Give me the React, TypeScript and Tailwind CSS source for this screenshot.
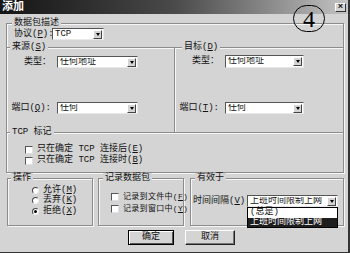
import React from "react";

const font = { fontFamily: '"Liberation Mono", "Noto Sans CJK SC", monospace' };

function Combo({ text, className }: { text: string; className: string }) {
  return (
    <div className={`flex items-center bg-white border border-t-[#555] border-l-[#555] border-b-[#e8e8e8] border-r-[#e8e8e8] ${className}`}>
      <span className="flex-1 pl-[2px] text-[9px] leading-none whitespace-nowrap overflow-hidden">{text}</span>
      <div className="shrink-0 w-[9px] h-[9px] mr-[1px] flex items-center justify-center bg-[#d4d4d4] border border-t-white border-l-white border-b-[#444] border-r-[#444]">
        <div className="w-0 h-0 border-x-[2.5px] border-x-transparent border-t-[3px] border-t-black" />
      </div>
    </div>
  );
}

function Check({ small, children }: { small?: boolean; children: React.ReactNode }) {
  return (
    <div className="flex items-center h-[9px] gap-[4px] whitespace-nowrap">
      <div className="shrink-0 w-[8px] h-[8px] bg-white border border-t-[#555] border-l-[#555] border-b-[#e0e0e0] border-r-[#e0e0e0]" />
      <span className={`${small ? "text-[8px] tracking-[0.3px]" : "text-[9px]"} leading-none`}>{children}</span>
    </div>
  );
}

function Radio({ on, children }: { on?: boolean; children: React.ReactNode }) {
  return (
    <div className="flex items-center h-[10.5px] gap-[4px] whitespace-nowrap">
      <div className="shrink-0 w-[7px] h-[7px] rounded-full bg-white border border-t-[#444] border-l-[#444] border-b-[#eee] border-r-[#eee] flex items-center justify-center">
        {on && <div className="w-[3px] h-[3px] rounded-full bg-black" />}
      </div>
      <span className="text-[9px] leading-none">{children}</span>
    </div>
  );
}

function Legend({ text, className }: { text: React.ReactNode; className: string }) {
  return (
    <span className={`absolute top-[-6px] px-[2px] bg-[#d4d4d4] text-[9px] leading-[10px] whitespace-nowrap ${className}`}>{text}</span>
  );
}

const groupCls = "relative border border-[#8c8c8c] shadow-[1px_1px_0_#f6f6f6,inset_1px_1px_0_#f6f6f6]";

export default function App() {
  return (
    <div style={font} className="relative w-[350px] h-[253px] bg-[#d4d4d4] text-[#111] overflow-hidden border-r-2 border-b border-[#333] flex flex-col">
      {/* title bar */}
      <div className="h-[14px] flex items-center justify-between bg-gradient-to-r from-[#151515] via-[#4a4a4a] to-[#c4c4c4]">
        <span className="pl-[2px] text-white font-bold text-[11px] leading-none">添加</span>
        <div className="mr-[2px] w-[11px] h-[9px] bg-[#d4d4d4] border border-t-white border-l-white border-b-[#333] border-r-[#333] flex items-center justify-center text-[9px] leading-none font-bold">×</div>
      </div>

      {/* 数据包描述 */}
      <div className={`${groupCls} mt-[9px] ml-[6px] w-[338px] h-[150px]`}>
        <Legend text="数据包描述" className="left-[5px]" />
        <div className="mt-[4px] pl-[7px] flex items-center h-[12px]">
          <span className="w-[38px] text-[9px] leading-none whitespace-nowrap">协议(<u>P</u>):</span>
          <Combo text="TCP" className="w-[52px] h-[12px]" />
        </div>

        <div className="mt-[7px] flex h-[86px] border-t border-b border-[#8c8c8c] shadow-[0_1px_0_#f6f6f6,inset_0_1px_0_#f6f6f6]">
          <div className="relative w-[168px] border-r border-[#8c8c8c]">
            <Legend text={<>来源(<u>S</u>)</>} className="left-[3px]" />
            <div className="mt-[8px] flex items-center h-[12px]">
              <span className="w-[47px] pr-[3px] text-right text-[9px] leading-none whitespace-nowrap">类型：</span>
              <Combo text="任何地址" className="ml-[3px] w-[81px] h-[12px]" />
            </div>
            <div className="mt-[34px] flex items-center h-[12px]">
              <span className="w-[47px] pr-[3px] text-right text-[9px] leading-none whitespace-nowrap">端口(<u>Q</u>):</span>
              <Combo text="任何" className="ml-[3px] w-[81px] h-[12px]" />
            </div>
          </div>
          <div className="relative flex-1 border-l border-[#f6f6f6]">
            <Legend text={<>目标(<u>D</u>)</>} className="left-[6px]" />
            <div className="mt-[7px] flex items-center h-[13px]">
              <span className="w-[46px] pr-[3px] text-right text-[9px] leading-none whitespace-nowrap">类型：</span>
              <Combo text="任何地址" className="ml-[3px] w-[79px] h-[13px]" />
            </div>
            <div className="mt-[34px] flex items-center h-[12px]">
              <span className="w-[46px] pr-[3px] text-right text-[9px] leading-none whitespace-nowrap">端口(<u>T</u>):</span>
              <Combo text="任何" className="ml-[3px] w-[79px] h-[12px]" />
            </div>
          </div>
        </div>

        <div className="relative pt-[12px]">
          <Legend text="TCP 标记" className="left-[3px]" />
          <div className="pl-[18px] flex flex-col gap-[2px]">
            <Check>只在确定 TCP 连接后(<u>E</u>)</Check>
            <Check>只在确定 TCP 连接时(<u>B</u>)</Check>
          </div>
        </div>
      </div>

      {/* bottom groups */}
      <div className="mt-[5px] ml-[7px] flex h-[48px]">
        <div className={`${groupCls} w-[86px]`}>
          <Legend text="操作" className="left-[3px]" />
          <div className="mt-[6px] pl-[24px] flex flex-col">
            <Radio>允许(<u>M</u>)</Radio>
            <Radio>丢弃(<u>K</u>)</Radio>
            <Radio on>拒绝(<u>X</u>)</Radio>
          </div>
        </div>
        <div className={`${groupCls} ml-[5px] w-[86px] overflow-visible`}>
          <Legend text="记录数据包" className="left-[4px]" />
          <div className="mt-[13px] pl-[12px] flex flex-col gap-[3px]">
            <Check small>记录到文件中(<u>F</u>)</Check>
            <Check small>记录到窗口中(<u>Y</u>)</Check>
          </div>
        </div>
        <div className={`${groupCls} ml-[6px] w-[154px]`}>
          <Legend text="有效于" className="left-[4px]" />
          <div className="mt-[16px] pl-[2px] flex items-center h-[12px]">
            <span className="w-[54px] text-[9px] leading-none whitespace-nowrap">时间间隔(<u>V</u>):</span>
            <Combo text="上班时间限制上网" className="w-[91px] h-[12px]" />
          </div>
          <div className="absolute left-[56px] top-[28px] w-[91px] bg-white border border-black text-[9px] leading-[9px]">
            <div className="h-[9.5px] pl-[2px] whitespace-nowrap">(总是)</div>
            <div className="h-[9.5px] pl-[2px] whitespace-nowrap bg-[#1e1e1e] text-white">上班时间限制上网</div>
          </div>
        </div>
      </div>

      {/* buttons */}
      <div className="mt-[4px] ml-[128px] flex gap-[11px]">
        <div className="w-[46px] h-[15px] flex items-center justify-center border border-black shadow-[inset_1px_1px_0_#fff,inset_-1px_-1px_0_#555] text-[9px] leading-none">确定</div>
        <div className="w-[50px] h-[15px] flex items-center justify-center border border-t-white border-l-white border-b-[#222] border-r-[#222] shadow-[inset_-1px_-1px_0_#777] text-[9px] leading-none">取消</div>
      </div>

      {/* circled annotation */}
      <div className="absolute left-[293px] top-[5px] w-[32px] h-[27px] rounded-full border border-black flex items-center justify-center">
        <span className="text-[24px] leading-none text-black" style={{ fontFamily: '"Liberation Serif", serif' }}>4</span>
      </div>
    </div>
  );
}
